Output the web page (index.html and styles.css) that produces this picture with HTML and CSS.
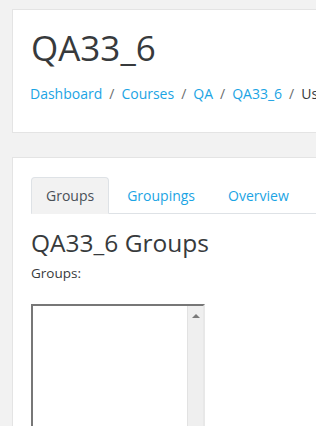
FILE: index.html
```html
<!DOCTYPE html>
<html>
<head>
  <title>QA33_6: Groups</title>
  <link rel="stylesheet" href="styles.css">
</head>
<body>

<div class="page">
  <header class="card page-header">
    <h1>QA33_6</h1>
    <nav class="breadcrumb">
      <a href="#">Dashboard</a>
      <span class="sep">/</span>
      <a href="#">Courses</a>
      <span class="sep">/</span>
      <a href="#">QA</a>
      <span class="sep">/</span>
      <a href="#">QA33_6</a>
      <span class="sep">/</span>
      <span class="current">Users</span>
      <span class="sep">/</span>
      <span class="current">Groups</span>
    </nav>
  </header>

  <div class="card main">
    <ul class="tabs">
      <li class="tab active">Groups</li>
      <li class="tab"><a href="#">Groupings</a></li>
      <li class="tab"><a href="#">Overview</a></li>
    </ul>

    <h2>QA33_6 Groups</h2>
    <label class="label">Groups:</label>

    <!-- empty group list box -->
    <div class="listbox">
      <div class="list"></div>
      <div class="scrollbar">
        <span class="arrow"></span>
      </div>
    </div>
  </div>
</div>

</body>
</html>
```

FILE: styles.css
```css
html, body {
  overflow: hidden;
}

body {
  font-family: "Open Sans", "Liberation Sans", sans-serif;
  background: #f2f2f2;
  color: #373a3c;
  margin: 0;
}

a {
  color: #1ba4e4;
  text-decoration: none;
}

.page {
  padding: 9px 0 0 12px;
  width: 500px;
}

.card {
  background: white;
  border: 1px solid #e4e4e4;
}

.page-header {
  height: 122px;
  padding: 0 18px;
}

h1 {
  font-size: 35px;
  font-weight: 400;
  line-height: 42px;
  margin: 17px 0 0 0;
}

.breadcrumb {
  display: flex;
  font-size: 14px;
  line-height: 21px;
  margin-top: 14px;
  margin-left: -1px;
  white-space: nowrap;
}

.sep {
  color: #6a6c6e;
  padding: 0 7px;
}

.current {
  color: #373a3c;
}

.main {
  margin-top: 24px;
  padding: 19px 18px 0 18px;
  height: 400px;
}

.tabs {
  display: flex;
  list-style: none;
  margin: 0;
  padding: 0;
  border-bottom: 1px solid #dee2e6;
  font-size: 14px;
}

.tab {
  padding: 8px 16px;
  line-height: 19px;
  border: 1px solid transparent;
  border-radius: 4px 4px 0 0;
  margin-bottom: -1px;
}

.tab + .tab {
  margin-left: 1px;
}

.tab:last-child {
  margin-left: -1px;
}

.tab.active {
  padding: 8px 14px;
  background: #f2f2f2;
  border-color: #dee2e6 #dee2e6 #f2f2f2;
  color: #495057;
}

h2 {
  font-size: 24.5px;
  font-weight: 400;
  line-height: 31px;
  margin: 13px 0 0 0;
}

.label {
  display: block;
  font-size: 13.5px;
  margin-top: 6px;
}

.listbox {
  display: flex;
  width: 170px;
  height: 200px;
  margin-top: 22px;
  border: 2px solid;
  border-color: #777 #e8e8e8 #e8e8e8 #777;
}

.list {
  flex: 1;
}

.scrollbar {
  width: 15px;
  background: #efefef;
  border-left: 1px solid #e2e2e2;
  display: flex;
  justify-content: center;
}

.arrow {
  margin-top: 8px;
  width: 0;
  height: 0;
  border-left: 4px solid transparent;
  border-right: 4px solid transparent;
  border-bottom: 4px solid #7a7a7a;
}
```
